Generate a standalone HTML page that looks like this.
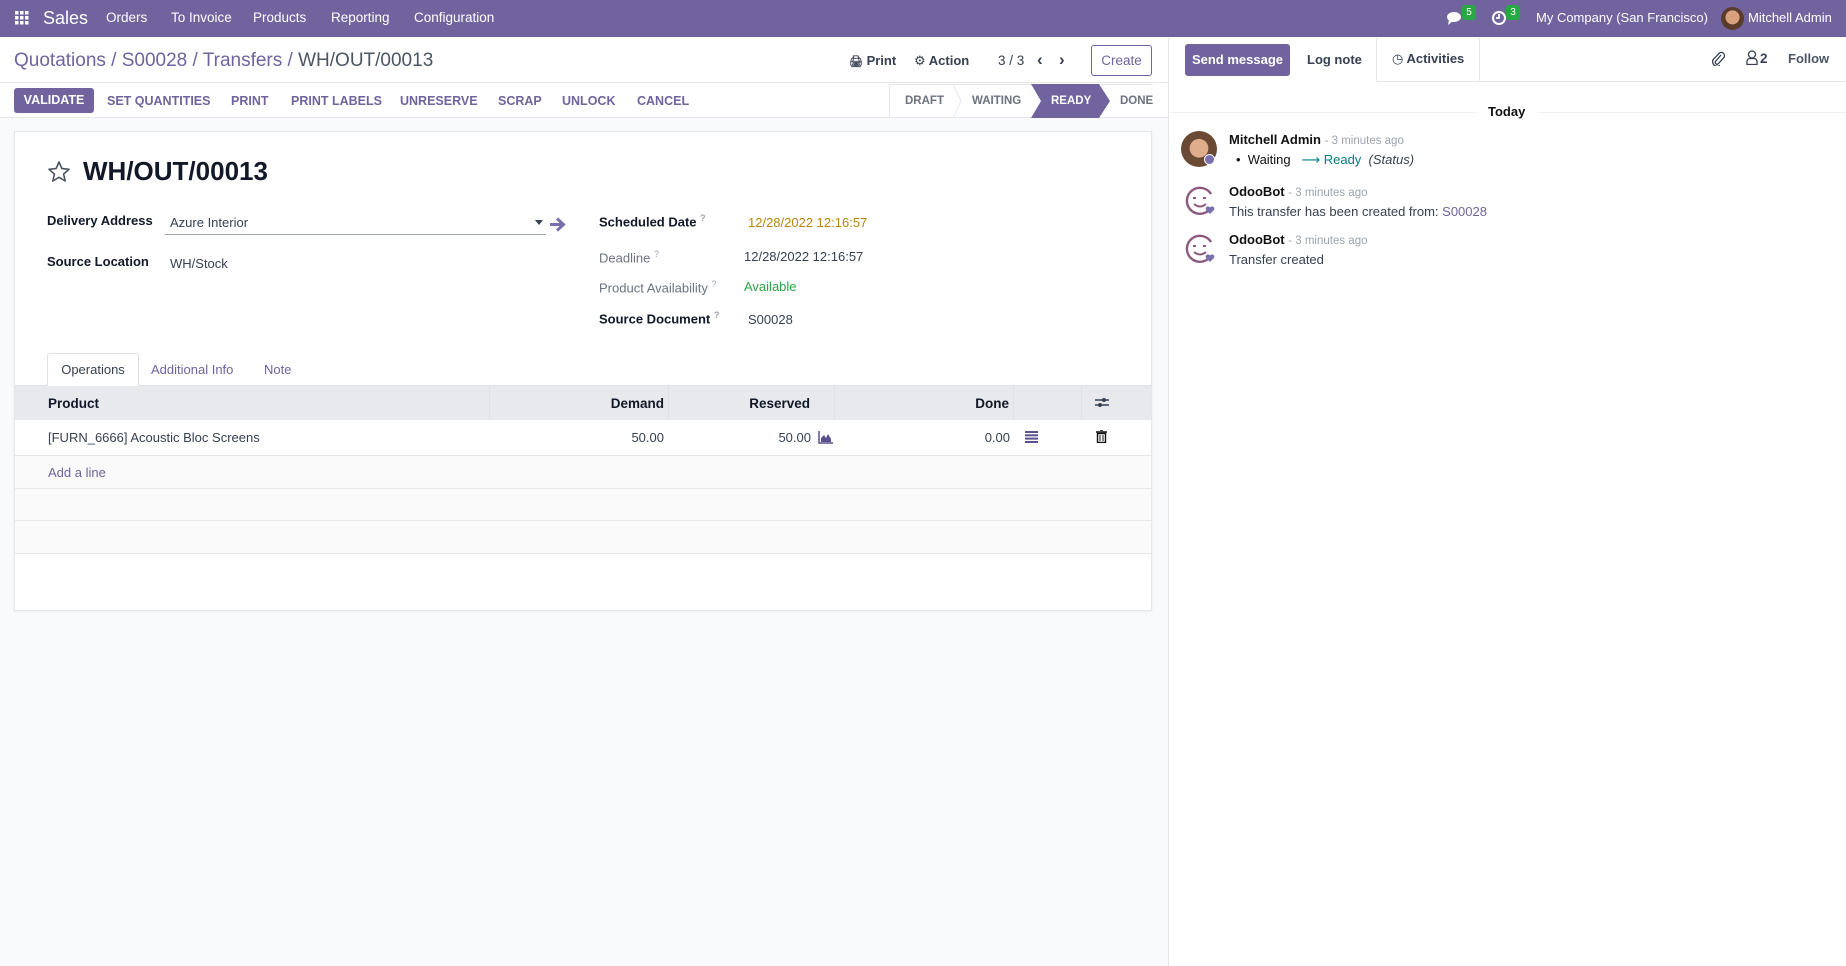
<!DOCTYPE html>
<html><head><meta charset="utf-8"><style>
*{box-sizing:border-box;margin:0;padding:0}
body{width:1846px;height:966px;overflow:hidden;font-family:"Liberation Sans","DejaVu Sans",sans-serif;font-size:13.5px;color:#374151;background:#fff;position:relative}
.a{position:absolute;white-space:nowrap}
.nav{left:0;top:0;width:1846px;height:37px;background:#71639e;color:#fff}
.nav .a{top:10px;font-size:13.5px;color:#fff}
.b{font-weight:bold}
.pu{color:#71639e}
.lbl{font-weight:bold;color:#111827}
.gl{color:#6b7280}
sup{font-size:9px;color:#9ca3af}
.btn{top:94px;font-size:12.5px;font-weight:bold;color:#71639e}
.th{top:396px;font-weight:bold;color:#111827}
.st{top:95px;font-size:11.5px;font-weight:bold}
</style></head><body>
<div class="a nav">
 <svg class="a" style="left:15px;top:11px" width="14" height="14" viewBox="0 0 14 14" fill="#fff"><rect x="0" y="0" width="3.5" height="3.5"/><rect x="5" y="0" width="3.5" height="3.5"/><rect x="10" y="0" width="3.5" height="3.5"/><rect x="0" y="5" width="3.5" height="3.5"/><rect x="5" y="5" width="3.5" height="3.5"/><rect x="10" y="5" width="3.5" height="3.5"/><rect x="0" y="10" width="3.5" height="3.5"/><rect x="5" y="10" width="3.5" height="3.5"/><rect x="10" y="10" width="3.5" height="3.5"/></svg>
 <div class="a" style="left:43px;top:8px;font-size:18px">Sales</div>
 <div class="a" style="left:106px">Orders</div>
 <div class="a" style="left:171px">To Invoice</div>
 <div class="a" style="left:253px">Products</div>
 <div class="a" style="left:331px">Reporting</div>
 <div class="a" style="left:414px">Configuration</div>
 <svg class="a" style="left:1446px;top:10px" width="18" height="16" viewBox="0 0 18 16" fill="#fff"><ellipse cx="8" cy="7" rx="7" ry="5"/><path d="M3 10 L2 15 L7 11Z"/></svg>
 <div class="a" style="left:1462px;top:5px;width:14px;height:15px;background:#28a745;border-radius:3px;font-size:10px;text-align:center;line-height:15px">5</div>
 <svg class="a" style="left:1491px;top:10px" width="16" height="16" viewBox="0 0 16 16"><circle cx="8" cy="8" r="6" fill="none" stroke="#fff" stroke-width="2"/><path d="M8 4v4h-3" stroke="#fff" stroke-width="1.8" fill="none"/></svg>
 <div class="a" style="left:1506px;top:5px;width:14px;height:15px;background:#28a745;border-radius:3px;font-size:10px;text-align:center;line-height:15px">3</div>
 <div class="a" style="left:1536px;font-size:13px">My Company (San Francisco)</div>
 <div class="a" style="left:1721px;top:7px;width:23px;height:23px;border-radius:50%;background:radial-gradient(circle at 50% 45%,#d9a27f 0 40%,#5a3b2a 42%)"></div>
 <div class="a" style="left:1748px;font-size:13px">Mitchell Admin</div>
</div>
<div class="a" style="left:0;top:37px;width:1168px;height:929px;background:#f9fafb"></div>
<div class="a" style="left:0;top:37px;width:1168px;height:81px;background:#fff;border-bottom:1px solid #e5e7eb"></div>
<div class="a" style="left:0;top:82px;width:1168px;height:1px;background:#e5e7eb"></div>
<div class="a" style="left:14px;top:50px;font-size:19px;color:#71639e">Quotations / S00028 / Transfers / <span style="color:#4b5563">WH/OUT/00013</span></div>
<div class="a b" style="left:849px;top:53px;color:#374151;font-size:13px"><span style="font-size:11px">&#128424;</span> Print</div>
<div class="a b" style="left:914px;top:53px;color:#374151;font-size:13px">&#9881; Action</div>
<div class="a" style="left:998px;top:53px">3 / 3</div>
<div class="a b" style="left:1037px;top:50px;font-size:17px">&#8249;</div>
<div class="a b" style="left:1059px;top:50px;font-size:17px">&#8250;</div>
<div class="a" style="left:1091px;top:45px;width:61px;height:31px;border:1px solid #71639e;border-radius:3px;color:#71639e;text-align:center;line-height:29px">Create</div>
<div class="a" style="left:14px;top:88px;width:80px;height:25px;background:#71639e;border-radius:3px;color:#fff;font-weight:bold;text-align:center;line-height:25px;font-size:12.5px">VALIDATE</div>
<div class="a btn" style="left:107px">SET QUANTITIES</div>
<div class="a btn" style="left:231px">PRINT</div>
<div class="a btn" style="left:291px">PRINT LABELS</div>
<div class="a btn" style="left:400px">UNRESERVE</div>
<div class="a btn" style="left:498px">SCRAP</div>
<div class="a btn" style="left:562px">UNLOCK</div>
<div class="a btn" style="left:637px">CANCEL</div>
<svg class="a" style="left:889px;top:84px" width="265" height="34" viewBox="0 0 265 34"><path d="M0.5 0.5 H264 M0.5 0.5 V34" stroke="#e5e7eb" fill="none"/><path d="M64 0 L72 17 L64 34" stroke="#e5e7eb" fill="none"/><path d="M142 0 H210 L221 17 L210 34 H142 L152 17Z" fill="#71639e"/></svg>
<div class="a st" style="left:905px;color:#6b7280">DRAFT</div>
<div class="a st" style="left:972px;color:#6b7280">WAITING</div>
<div class="a st" style="left:1051px;color:#fff">READY</div>
<div class="a st" style="left:1120px;color:#6b7280">DONE</div>
<div class="a" style="left:14px;top:131px;width:1138px;height:480px;background:#fff;border:1px solid #e5e7eb;box-shadow:0 1px 3px rgba(0,0,0,.06)"></div>
<svg class="a" style="left:47px;top:160px" width="24" height="24" viewBox="0 0 24 24"><path d="M12 2 L14.9 8.6 L22 9.3 L16.6 14 L18.2 21 L12 17.3 L5.8 21 L7.4 14 L2 9.3 L9.1 8.6Z" fill="none" stroke="#4b5563" stroke-width="1.6" stroke-linejoin="round"/></svg>
<div class="a b" style="left:83px;top:156px;font-size:26px;color:#111827">WH/OUT/00013</div>
<div class="a lbl" style="left:47px;top:213px;font-size:13px">Delivery Address</div>
<div class="a" style="left:170px;top:215px;color:#374151;font-size:13px">Azure Interior</div>
<div class="a" style="left:165px;top:234px;width:381px;height:1px;background:#9ca3af"></div>
<svg class="a" style="left:535px;top:220px" width="8" height="5"><path d="M0 0h8L4 5z" fill="#374151"/></svg>
<svg class="a" style="left:549px;top:216px" width="18" height="17" viewBox="0 0 18 17"><path d="M1 8.5h12M8 2.5l6.5 6-6.5 6" stroke="#7c6fad" stroke-width="3" fill="none"/></svg>
<div class="a lbl" style="left:47px;top:254px;font-size:13px">Source Location</div>
<div class="a" style="left:170px;top:256px;font-size:13px">WH/Stock</div>
<div class="a lbl" style="left:599px;top:213px;font-size:13px">Scheduled Date <sup>?</sup></div>
<div class="a" style="left:748px;top:215px;color:#b8860b;font-size:13px">12/28/2022 12:16:57</div>
<div class="a gl" style="left:599px;top:249px;font-size:13px">Deadline <sup>?</sup></div>
<div class="a" style="left:744px;top:249px;font-size:13px">12/28/2022 12:16:57</div>
<div class="a gl" style="left:599px;top:279px;font-size:13px">Product Availability <sup>?</sup></div>
<div class="a" style="left:744px;top:279px;color:#28a745;font-size:13px">Available</div>
<div class="a lbl" style="left:599px;top:310px;font-size:13px">Source Document <sup>?</sup></div>
<div class="a" style="left:748px;top:312px;font-size:13px">S00028</div>
<div class="a" style="left:15px;top:385px;width:1136px;height:1px;background:#dee2e6"></div>
<div class="a" style="left:47px;top:353px;width:92px;height:33px;border:1px solid #dee2e6;border-bottom:1px solid #fff;background:#fff;border-radius:3px 3px 0 0;text-align:center;line-height:31px;font-size:13px">Operations</div>
<div class="a pu" style="left:151px;top:362px;font-size:13px">Additional Info</div>
<div class="a pu" style="left:264px;top:362px;font-size:13px">Note</div>
<div class="a" style="left:15px;top:386px;width:1136px;height:34px;background:#e7e9ed"></div>
<div class="a" style="left:489px;top:386px;width:1px;height:34px;background:#dee2e6"></div>
<div class="a" style="left:668px;top:386px;width:1px;height:34px;background:#dee2e6"></div>
<div class="a" style="left:834px;top:386px;width:1px;height:34px;background:#dee2e6"></div>
<div class="a" style="left:1013px;top:386px;width:1px;height:34px;background:#dee2e6"></div>
<div class="a" style="left:1081px;top:386px;width:1px;height:34px;background:#dee2e6"></div>
<div class="a th" style="left:48px">Product</div>
<div class="a th" style="left:560px;width:104px;text-align:right">Demand</div>
<div class="a th" style="left:700px;width:110px;text-align:right">Reserved</div>
<div class="a th" style="left:900px;width:109px;text-align:right">Done</div>
<svg class="a" style="left:1095px;top:396px" width="14" height="13" viewBox="0 0 14 13"><path d="M0 4h14M0 9h14" stroke="#374151" stroke-width="1.5"/><circle cx="9" cy="4" r="2" fill="#374151"/><circle cx="5" cy="9" r="2" fill="#374151"/></svg>
<div class="a" style="left:15px;top:455px;width:1136px;height:1px;background:#e5e7eb"></div>
<div class="a" style="left:48px;top:430px;font-size:13px">[FURN_6666] Acoustic Bloc Screens</div>
<div class="a" style="left:560px;top:430px;width:104px;text-align:right;font-size:13px">50.00</div>
<div class="a" style="left:700px;top:430px;width:111px;text-align:right;font-size:13px">50.00</div>
<svg class="a" style="left:818px;top:431px" width="15" height="13" viewBox="0 0 15 13"><path d="M1 0v12h14" stroke="#5b4f8f" stroke-width="1.5" fill="none"/><path d="M3 11V7l3-3 2 3 2-4 3 5v3z" fill="#5b4f8f"/></svg>
<div class="a" style="left:900px;top:430px;width:110px;text-align:right;font-size:13px">0.00</div>
<svg class="a" style="left:1025px;top:431px" width="13" height="12" viewBox="0 0 13 12" fill="#5b4f8f"><rect y="0" width="13" height="2"/><rect y="3.3" width="13" height="2"/><rect y="6.6" width="13" height="2"/><rect y="10" width="13" height="2"/></svg>
<svg class="a" style="left:1096px;top:430px" width="11" height="13" viewBox="0 0 11 13"><path d="M0 2h11M4 0h3" stroke="#111" stroke-width="1.5"/><path d="M1.5 3.5h8V12.5h-8z" fill="none" stroke="#111" stroke-width="1.4"/><path d="M4 5v6M7 5v6" stroke="#111"/></svg>
<div class="a" style="left:15px;top:456px;width:1136px;height:97px;background:#fafafa"></div>
<div class="a pu" style="left:48px;top:465px;font-size:13px">Add a line</div>
<div class="a" style="left:15px;top:488px;width:1136px;height:1px;background:#e5e7eb"></div>
<div class="a" style="left:15px;top:520px;width:1136px;height:1px;background:#e5e7eb"></div>
<div class="a" style="left:15px;top:553px;width:1136px;height:1px;background:#e5e7eb"></div>
<div class="a" style="left:1168px;top:37px;width:1px;height:929px;background:#e5e7eb"></div>
<div class="a" style="left:1185px;top:44px;width:105px;height:32px;background:#71639e;border-radius:3px;color:#fff;font-weight:bold;text-align:center;line-height:32px;font-size:13px">Send message</div>
<div class="a b" style="left:1307px;top:52px;color:#374151;font-size:13px">Log note</div>
<div class="a" style="left:1376px;top:37px;width:104px;height:45px;border-left:1px solid #e5e7eb;border-right:1px solid #e5e7eb"></div>
<div class="a" style="left:1376px;top:81px;width:470px;height:1px;background:#e5e7eb"></div>
<div class="a b" style="left:1392px;top:51px;color:#374151;font-size:13px">&#9719; Activities</div>
<svg class="a" style="left:1711px;top:50px" width="14" height="16" viewBox="0 0 14 16"><path d="M10 5 L4.5 11.5a1.8 1.8 0 0 0 2.6 2.4L12.8 7.6a3.2 3.2 0 0 0-4.6-4.4L2.3 9.4a4.5 4.5 0 0 0 6.5 6" stroke="#374151" stroke-width="1.3" fill="none"/></svg>
<svg class="a" style="left:1746px;top:50px" width="12" height="15" viewBox="0 0 12 15"><circle cx="6" cy="4.5" r="3.5" fill="none" stroke="#374151" stroke-width="1.3"/><path d="M1 14.5v-3a3 3 0 0 1 3-3h4a3 3 0 0 1 3 3v3z" fill="none" stroke="#374151" stroke-width="1.3"/></svg>
<div class="a b" style="left:1760px;top:51px">2</div>
<div class="a b" style="left:1788px;top:51px;color:#4b5563;font-size:13px">Follow</div>
<div class="a" style="left:1169px;top:112px;width:677px;height:1px;background:#f1f1f1"></div>
<div class="a b" style="left:1476px;top:104px;padding:0 12px;background:#fff;color:#111;font-size:13px">Today</div>
<div class="a" style="left:1181px;top:131px;width:36px;height:36px;border-radius:50%;background:radial-gradient(circle at 50% 48%,#e0ad8c 0 35%,#6b4a35 37%)"></div>
<div class="a" style="left:1204px;top:154px;width:11px;height:11px;border-radius:50%;background:#7c6fad;border:1.5px solid #fff"></div>
<div class="a b" style="left:1229px;top:132px;color:#111;font-size:13px">Mitchell Admin <span style="font-weight:normal;color:#9ca3af;font-size:11.5px">- 3 minutes ago</span></div>
<div class="a" style="left:1236px;top:152px;color:#111;font-size:13px">&bull;&nbsp; Waiting &nbsp; <span style="color:#017e84">&#10230; Ready</span> &nbsp;<i style="color:#374151">(Status)</i></div>
<svg class="a" style="left:1183px;top:184px" width="34" height="34" viewBox="0 0 34 34"><path d="M27 25A13 13 0 1 1 28 10" stroke="#8d5a7d" stroke-width="2.4" fill="none"/><path d="M10 14h3M20 14h3M11 20q6 5 12 0" stroke="#8d5a7d" stroke-width="2" fill="none"/><path d="M27 30l-4-4a2.2 2.2 0 0 1 4-2.5a2.2 2.2 0 0 1 4 2.5z" fill="#7c6fad"/></svg>
<div class="a b" style="left:1229px;top:184px;color:#111;font-size:13px">OdooBot <span style="font-weight:normal;color:#9ca3af;font-size:11.5px">- 3 minutes ago</span></div>
<div class="a" style="left:1229px;top:204px;color:#374151;font-size:13px">This transfer has been created from: <span class="pu">S00028</span></div>
<svg class="a" style="left:1183px;top:232px" width="34" height="34" viewBox="0 0 34 34"><path d="M27 25A13 13 0 1 1 28 10" stroke="#8d5a7d" stroke-width="2.4" fill="none"/><path d="M10 14h3M20 14h3M11 20q6 5 12 0" stroke="#8d5a7d" stroke-width="2" fill="none"/><path d="M27 30l-4-4a2.2 2.2 0 0 1 4-2.5a2.2 2.2 0 0 1 4 2.5z" fill="#7c6fad"/></svg>
<div class="a b" style="left:1229px;top:232px;color:#111;font-size:13px">OdooBot <span style="font-weight:normal;color:#9ca3af;font-size:11.5px">- 3 minutes ago</span></div>
<div class="a" style="left:1229px;top:252px;color:#374151;font-size:13px">Transfer created</div>
</body></html>
